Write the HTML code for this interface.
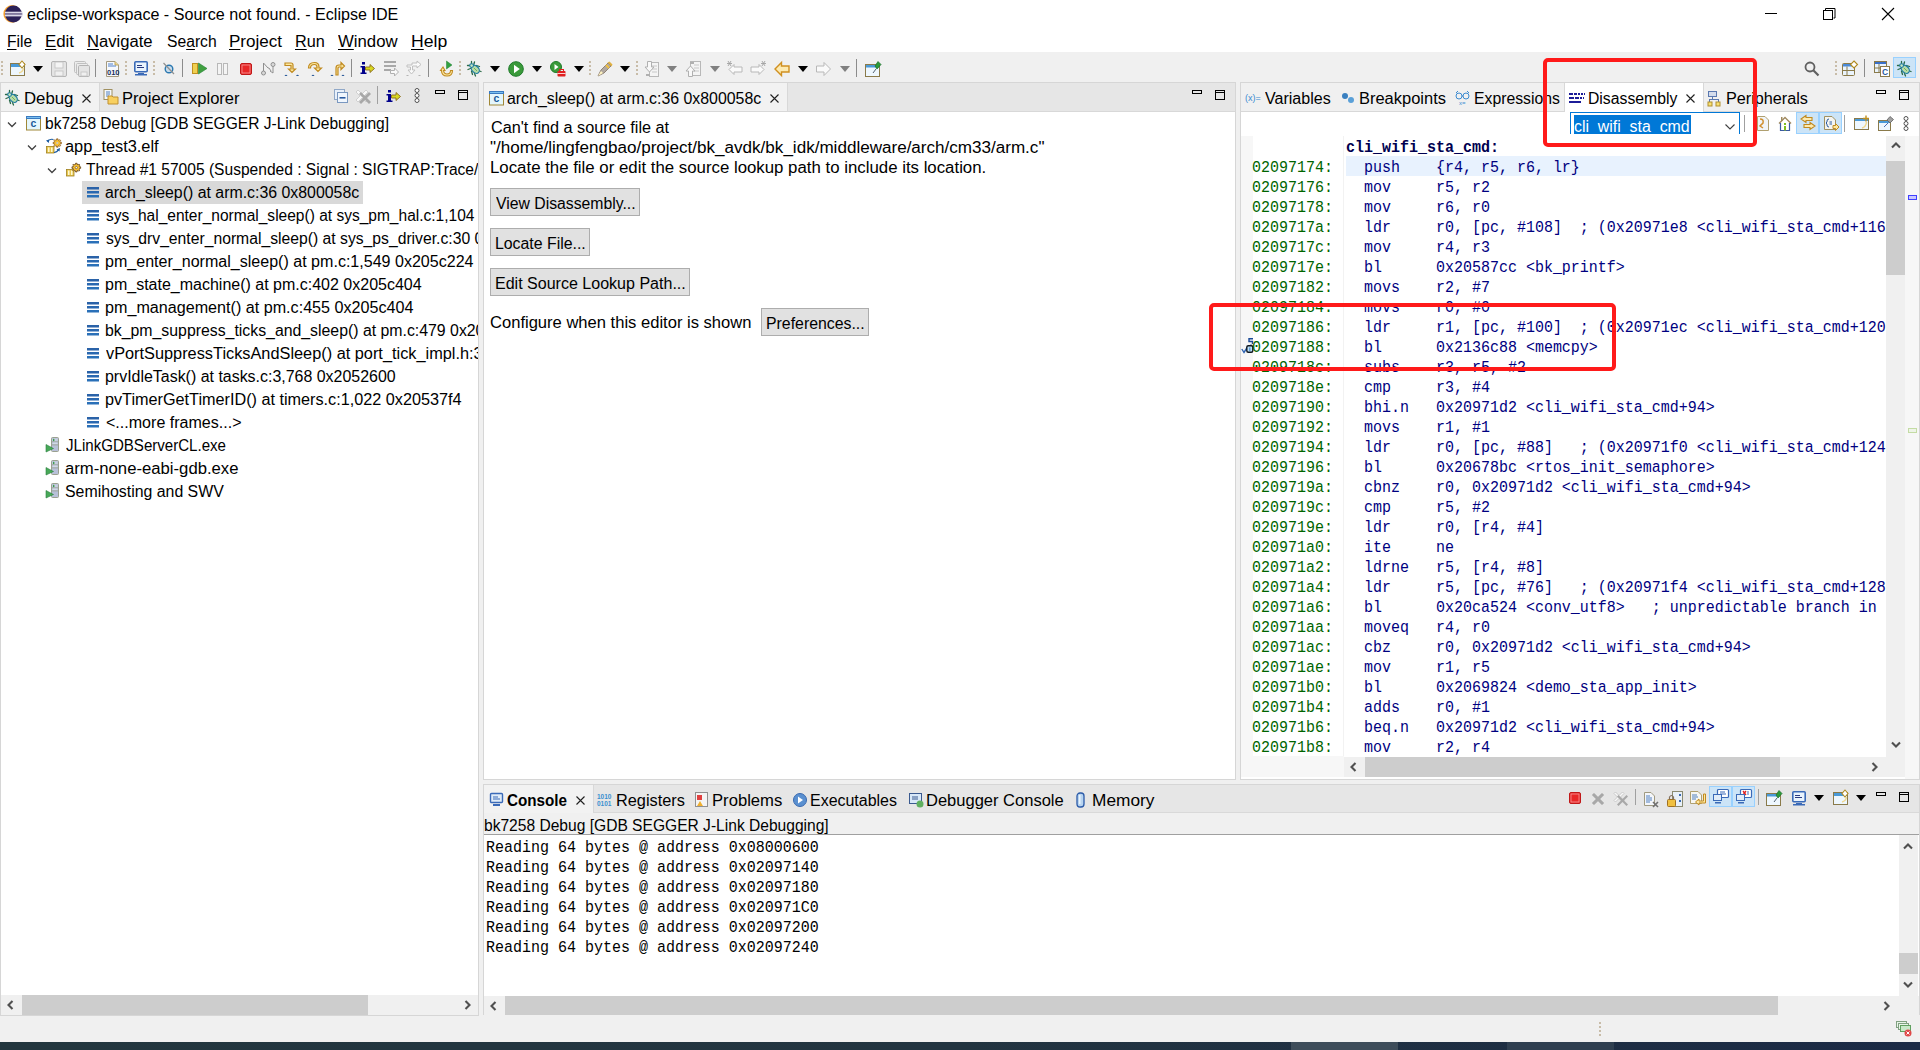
<!DOCTYPE html><html><head><meta charset="utf-8"><title>Eclipse IDE</title><style>
*{margin:0;padding:0}
html,body{width:1920px;height:1050px;overflow:hidden}
body{position:relative;background:#f0f0f0;font-family:"Liberation Sans",sans-serif;color:#000}
.a{position:absolute}
.t{position:absolute;white-space:pre;transform-origin:0 0;line-height:20px}
.m{font-family:"Liberation Mono",monospace}
u{text-decoration:underline;text-underline-offset:2px}
svg{overflow:visible}
</style></head><body><div class="a" style="left:0px;top:0px;width:1920px;height:52px;background:#ffffff;"></div>
<svg class="a" style="left:0;top:2px" width="26" height="24" viewBox="0 0 26 24"><circle cx="12.2" cy="11.9" r="8.8" fill="#f5a030"/><circle cx="13.4" cy="11.9" r="8.5" fill="#2c2158"/><rect x="5" y="9.7" width="17.5" height="1.6" fill="#dcd8e8"/><rect x="5" y="11.3" width="17.5" height="1.5" fill="#9088aa"/><rect x="5" y="12.8" width="17.5" height="1.6" fill="#dcd8e8"/></svg>
<div class="t" style="left:26.90px;top:5.30px;font-size:16px;color:#000;transform:scaleX(1.0060);">eclipse-workspace - Source not found. - Eclipse IDE</div>
<div class="a" style="left:1765px;top:13px;width:12px;height:1px;background:#000;"></div>
<div class="a" style="left:1823px;top:10px;width:10px;height:10px;background:transparent;border:1px solid #000;box-sizing:border-box"></div>
<svg class="a" style="left:1825px;top:8px" width="11" height="11" viewBox="0 0 11 11"><path d="M0.5 2V0.5H10V10H8.5" fill="none" stroke="#000"/></svg>
<svg class="a" style="left:1882px;top:8px" width="12" height="12" viewBox="0 0 12 12"><path d="M0 0L12 12M12 0L0 12" stroke="#000" stroke-width="1.1"/></svg>
<div class="t" style="left:6.53px;top:31.90px;font-size:16px;color:#000;transform:scaleX(0.9748);"><u>F</u>ile</div>
<div class="t" style="left:44.63px;top:31.90px;font-size:16px;color:#000;transform:scaleX(1.0536);"><u>E</u>dit</div>
<div class="t" style="left:87.15px;top:31.90px;font-size:16px;color:#000;transform:scaleX(1.0376);"><u>N</u>avigate</div>
<div class="t" style="left:166.81px;top:31.90px;font-size:16px;color:#000;transform:scaleX(0.9796);">Se<u>a</u>rch</div>
<div class="t" style="left:228.62px;top:31.90px;font-size:16px;color:#000;transform:scaleX(1.0640);"><u>P</u>roject</div>
<div class="t" style="left:294.68px;top:31.90px;font-size:16px;color:#000;transform:scaleX(1.0148);"><u>R</u>un</div>
<div class="t" style="left:337.90px;top:31.90px;font-size:16px;color:#000;transform:scaleX(1.0457);"><u>W</u>indow</div>
<div class="t" style="left:410.57px;top:31.90px;font-size:16px;color:#000;transform:scaleX(1.1003);"><u>H</u>elp</div>
<div class="a" style="left:0px;top:52px;width:1920px;height:31px;background:#f0f0f0;"></div>
<div class="a" style="left:1px;top:61px;width:2px;height:2px;background:#c8bca8;"></div>
<div class="a" style="left:1px;top:65px;width:2px;height:2px;background:#c8bca8;"></div>
<div class="a" style="left:1px;top:69px;width:2px;height:2px;background:#c8bca8;"></div>
<div class="a" style="left:1px;top:73px;width:2px;height:2px;background:#c8bca8;"></div>
<svg class="a" style="left:10px;top:61px" width="16" height="16" viewBox="0 0 16 16"><rect x="0.5" y="2.5" width="14" height="12" fill="#eef7fe" stroke="#8a7a4a"/><rect x="1" y="3" width="13" height="3" fill="#4a9ad8"/><path d="M9 12Q13 11 13.5 7" fill="none" stroke="#f0d890" stroke-width="1.5"/><path d="M12 0L15 3.5L12 7L9 3.5Z" fill="#fff" stroke="#b08a20" stroke-width="1.1"/></svg>
<svg class="a" style="left:33px;top:66px" width="10" height="6" viewBox="0 0 10 6"><path d="M0 0H10L5 6Z" fill="#000"/></svg>
<svg class="a" style="left:51px;top:61px" width="16" height="16" viewBox="0 0 16 16"><rect x="0.5" y="0.5" width="15" height="15" rx="1.5" fill="#e4e4e4" stroke="#b4b4b4"/><rect x="4" y="1" width="8" height="6" fill="#f4f4f4" stroke="#c0c0c0" stroke-width="0.8"/><rect x="4" y="10" width="8" height="5" fill="#f0f0f0" stroke="#c0c0c0" stroke-width="0.8"/></svg>
<svg class="a" style="left:74px;top:61px" width="16" height="16" viewBox="0 0 16 16"><rect x="0.5" y="0.5" width="11" height="11" rx="1" fill="#ececec" stroke="#c0c0c0"/><rect x="2.5" y="2.5" width="11" height="11" rx="1" fill="#ececec" stroke="#c0c0c0"/><rect x="4.5" y="4.5" width="11" height="11" rx="1.2" fill="#e4e4e4" stroke="#b4b4b4"/><rect x="7" y="11" width="6" height="4" fill="#f0f0f0" stroke="#c0c0c0" stroke-width="0.8"/></svg>
<div class="a" style="left:95px;top:59px;width:1px;height:18px;background:#8c8c8c;"></div>
<svg class="a" style="left:106px;top:61px" width="16" height="16" viewBox="0 0 16 16"><path d="M0.5 0.5H9L12.5 4V15.5H0.5Z" fill="#f6f9fd" stroke="#a49a80"/><path d="M9 0.5V4H12.5" fill="#f0d890" stroke="#c0a860"/><path d="M2 3H7M2 5H10" stroke="#5080c8" stroke-width="1"/><text x="1" y="14" font-family="Liberation Sans" font-weight="bold" font-size="7.5" fill="#1a3060">010</text></svg>
<div class="a" style="left:125px;top:61px;width:2px;height:2px;background:#c8bca8;"></div>
<div class="a" style="left:125px;top:65px;width:2px;height:2px;background:#c8bca8;"></div>
<div class="a" style="left:125px;top:69px;width:2px;height:2px;background:#c8bca8;"></div>
<div class="a" style="left:125px;top:73px;width:2px;height:2px;background:#c8bca8;"></div>
<svg class="a" style="left:134px;top:61px" width="16" height="16" viewBox="0 0 16 16"><rect x="0.8" y="0.8" width="12.4" height="10" rx="1" fill="#eaf4fd" stroke="#3a6ab8" stroke-width="1.6"/><path d="M3 4.5H8M3 6.5H10" stroke="#2a3a80" stroke-width="1"/><rect x="4" y="12" width="6" height="1" fill="#3a6ab8"/><rect x="1" y="13" width="12" height="1.5" fill="#3a6ab8"/></svg>
<div class="a" style="left:153px;top:61px;width:2px;height:2px;background:#c8bca8;"></div>
<div class="a" style="left:153px;top:65px;width:2px;height:2px;background:#c8bca8;"></div>
<div class="a" style="left:153px;top:69px;width:2px;height:2px;background:#c8bca8;"></div>
<div class="a" style="left:153px;top:73px;width:2px;height:2px;background:#c8bca8;"></div>
<svg class="a" style="left:163px;top:62px" width="16" height="16" viewBox="0 0 16 16"><circle cx="6" cy="7" r="3.8" fill="#c8dcec" stroke="#2a78b0" stroke-width="1.4"/><path d="M0.5 1L11 12" stroke="#909090" stroke-width="1.2"/></svg>
<div class="a" style="left:182px;top:59px;width:1px;height:18px;background:#8c8c8c;"></div>
<svg class="a" style="left:192px;top:62px" width="16" height="16" viewBox="0 0 16 16"><rect x="0.5" y="1.5" width="5" height="10" fill="#f0d050" stroke="#c09020"/><path d="M6.5 1L15 6.5L6.5 12Z" fill="#40a040" stroke="#208030" stroke-width="0.6"/></svg>
<svg class="a" style="left:217px;top:62px" width="16" height="16" viewBox="0 0 16 16"><rect x="0.5" y="1.5" width="4" height="11" fill="#f4f4f4" stroke="#b8b8b8"/><rect x="6.5" y="1.5" width="4" height="11" fill="#f4f4f4" stroke="#b8b8b8"/></svg>
<svg class="a" style="left:240px;top:63px" width="16" height="16" viewBox="0 0 16 16"><rect x="0.5" y="0.5" width="11" height="11" rx="1.5" fill="#e82828" stroke="#c01818"/><rect x="2" y="2" width="8" height="8" fill="none" stroke="#f49a9a" stroke-width="0.8"/></svg>
<svg class="a" style="left:261px;top:62px" width="16" height="16" viewBox="0 0 16 16"><circle cx="2.5" cy="11" r="2" fill="#d8d8d8" stroke="#909090"/><circle cx="12" cy="2.5" r="2" fill="#d8d8d8" stroke="#909090"/><path d="M2.5 9V1L7 6H8L10 9M12 4.5V11L9 9" fill="none" stroke="#909090"/></svg>
<svg class="a" style="left:284px;top:61px" width="16" height="16" viewBox="0 0 16 16"><path d="M1 2H7Q9 2 9 4V8H11.5L8 11.5L4.5 8H7V4.5H1Z" fill="#fce8a0" stroke="#c08a20" stroke-width="1.2"/><path d="M0.5 15Q2 12.5 3.5 15ZM12 15Q13.5 12.5 15 15Z" fill="#2a5a9a"/></svg>
<svg class="a" style="left:307px;top:61px" width="16" height="16" viewBox="0 0 16 16"><path d="M1.5 7Q1.5 1.5 7.5 1.5Q12 1.5 12 6V7H14.5L11 10.5L7.5 7H10V6Q10 3.5 7.5 3.5Q3.5 3.5 3.5 7Z" fill="#fce8a0" stroke="#c08a20" stroke-width="1.2"/><path d="M4.5 15Q6 12.5 7.5 15Z" fill="#2a5a9a"/></svg>
<svg class="a" style="left:330px;top:61px" width="16" height="16" viewBox="0 0 16 16"><path d="M6 14V7Q6 4 9 4H11V1.5L14.5 5L11 8.5V6H9Q8 6 8 7V14Z" fill="#fce8a0" stroke="#c08a20" stroke-width="1.2"/><path d="M0.5 15Q2 12.5 3.5 15ZM11.5 15Q13 12.5 14.5 15Z" fill="#2a5a9a"/></svg>
<div class="a" style="left:351px;top:59px;width:1px;height:18px;background:#8c8c8c;"></div>
<svg class="a" style="left:360px;top:61px" width="16" height="16" viewBox="0 0 16 16"><rect x="2" y="1" width="3" height="2.5" fill="#00008b"/><path d="M0.5 5H5V11.5H6.5V13H0.5V11.5H2V6.5H0.5Z" fill="#00008b"/><path d="M5.5 6H10V3.5L14.5 7.5L10 11.5V9H5.5Z" fill="#d8d820" stroke="#8a6a20" stroke-width="0.9"/></svg>
<svg class="a" style="left:384px;top:61px" width="16" height="16" viewBox="0 0 16 16"><rect x="0" y="0" width="12" height="2" fill="#a8a8a8"/><rect x="0" y="4" width="12" height="2" fill="#a8a8a8"/><rect x="0" y="8" width="7" height="2" fill="#a8a8a8"/><path d="M6.5 9.5H10.5V7L14.5 11L10.5 15V12.5H6.5Z" fill="#fafafa" stroke="#b0b0b0"/></svg>
<svg class="a" style="left:406px;top:61px" width="16" height="16" viewBox="0 0 16 16"><path d="M1 3H6V1H11V-1L15 2.5L11 6V4H6.5V8H9L5.5 12L2 8H4.5V5H1Z" fill="#fafafa" stroke="#c0c0c0" transform="translate(0,1)"/><path d="M0 15Q1.5 13 3 15ZM12 15Q13.5 13 15 15Z" fill="#b0b0b0"/></svg>
<div class="a" style="left:428px;top:59px;width:1px;height:18px;background:#8c8c8c;"></div>
<svg class="a" style="left:438px;top:61px" width="16" height="16" viewBox="0 0 16 16"><path d="M8.5 0L14 4L8.5 8Z" fill="#30a040" stroke="#208030" stroke-width="0.5"/><path d="M2.5 9.5L5 6L7 9.5H5.5Q6 13 9 13Q12.5 13 12.5 9.5H14.5Q14.5 15 9 15Q3.5 15 3.5 9.5Z" fill="#fce8a0" stroke="#c08a20" stroke-width="1.1"/></svg>
<div class="a" style="left:459px;top:61px;width:2px;height:2px;background:#c8bca8;"></div>
<div class="a" style="left:459px;top:65px;width:2px;height:2px;background:#c8bca8;"></div>
<div class="a" style="left:459px;top:69px;width:2px;height:2px;background:#c8bca8;"></div>
<div class="a" style="left:459px;top:73px;width:2px;height:2px;background:#c8bca8;"></div>
<svg class="a" style="left:467px;top:61px" width="16" height="16" viewBox="0 0 16 16"><g stroke="#2a6a48" stroke-width="1.3" stroke-linecap="round"><path d="M4.5 0.5V3M0.5 4.5H3M7.5 1L6.8 3.5M9.5 4.5L12.5 5.5M1 8.5L3.5 7.5M11 9.5L14 10.5M4.5 10L5.5 13.5M7.5 12.5L8.5 15"/></g><ellipse cx="8.3" cy="8.3" rx="3.3" ry="4.6" transform="rotate(-45 8.3 8.3)" fill="#b8dca8" stroke="#1e7aa0" stroke-width="1.2"/><circle cx="4.6" cy="4.6" r="1.9" fill="#c8e8c0" stroke="#1e7aa0" stroke-width="1.1"/><path d="M7 7L10 10" stroke="#70b060" stroke-width="1"/></svg>
<svg class="a" style="left:490px;top:66px" width="10" height="6" viewBox="0 0 10 6"><path d="M0 0H10L5 6Z" fill="#000"/></svg>
<svg class="a" style="left:508px;top:61px" width="16" height="16" viewBox="0 0 16 16"><circle cx="8" cy="8" r="7.3" fill="#3a9a3a" stroke="#1e7a2a" stroke-width="1"/><path d="M6 3.8L11.8 8L6 12.2Z" fill="#fff"/></svg>
<svg class="a" style="left:532px;top:66px" width="10" height="6" viewBox="0 0 10 6"><path d="M0 0H10L5 6Z" fill="#000"/></svg>
<svg class="a" style="left:550px;top:61px" width="16" height="16" viewBox="0 0 16 16"><circle cx="6" cy="6" r="5.5" fill="#3a9a3a" stroke="#1e7a2a"/><path d="M4.5 3L8.5 6L4.5 9Z" fill="#fff"/><rect x="7.5" y="10" width="8" height="5.5" rx="0.8" fill="#e02020"/><rect x="9.5" y="8.5" width="4" height="2" fill="none" stroke="#e02020"/><path d="M7.5 12.5H15.5" stroke="#fff" stroke-width="0.8"/></svg>
<svg class="a" style="left:574px;top:66px" width="10" height="6" viewBox="0 0 10 6"><path d="M0 0H10L5 6Z" fill="#000"/></svg>
<div class="a" style="left:589px;top:61px;width:2px;height:2px;background:#c8bca8;"></div>
<div class="a" style="left:589px;top:65px;width:2px;height:2px;background:#c8bca8;"></div>
<div class="a" style="left:589px;top:69px;width:2px;height:2px;background:#c8bca8;"></div>
<div class="a" style="left:589px;top:73px;width:2px;height:2px;background:#c8bca8;"></div>
<svg class="a" style="left:597px;top:61px" width="16" height="16" viewBox="0 0 16 16"><path d="M1 15L4 9L11 2L14 5L7 12Z" fill="#b0a8a0" stroke="#807060" stroke-width="0.8"/><path d="M10.5 1.5L14.5 5.5L15.5 3.5L12.5 0.5Z" fill="#e0b040"/><path d="M1 15L4 10L6 12Z" fill="#fff4c0"/><path d="M9 4L12 7" stroke="#f0c040" stroke-width="2"/></svg>
<svg class="a" style="left:620px;top:66px" width="10" height="6" viewBox="0 0 10 6"><path d="M0 0H10L5 6Z" fill="#000"/></svg>
<div class="a" style="left:636px;top:61px;width:2px;height:2px;background:#c8bca8;"></div>
<div class="a" style="left:636px;top:65px;width:2px;height:2px;background:#c8bca8;"></div>
<div class="a" style="left:636px;top:69px;width:2px;height:2px;background:#c8bca8;"></div>
<div class="a" style="left:636px;top:73px;width:2px;height:2px;background:#c8bca8;"></div>
<svg class="a" style="left:645px;top:61px" width="16" height="16" viewBox="0 0 16 16"><rect x="4.5" y="1.5" width="9" height="14" fill="#f4f4f4" stroke="#b8b8b8"/><path d="M7 5H12M7 8H12M7 11H12" stroke="#c8c8c8"/><path d="M2.5 0.5H6.5V6H9L4.5 11L0 6H2.5Z" fill="#f8f8f8" stroke="#b0b0b0"/><rect x="1" y="13" width="4" height="2" fill="#b0b0b0"/></svg>
<svg class="a" style="left:667px;top:66px" width="10" height="6" viewBox="0 0 10 6"><path d="M0 0H10L5 6Z" fill="#808080"/></svg>
<svg class="a" style="left:686px;top:61px" width="16" height="16" viewBox="0 0 16 16"><rect x="4.5" y="0.5" width="10" height="14" fill="#f4f4f4" stroke="#b8b8b8"/><path d="M8 4H13M8 7H13M8 10H13" stroke="#c8c8c8"/><rect x="4" y="1" width="4" height="2" fill="#b0b0b0"/><path d="M2.5 15.5H6.5V10H9L4.5 5L0 10H2.5Z" fill="#f8f8f8" stroke="#b0b0b0"/></svg>
<svg class="a" style="left:710px;top:66px" width="10" height="6" viewBox="0 0 10 6"><path d="M0 0H10L5 6Z" fill="#808080"/></svg>
<svg class="a" style="left:727px;top:61px" width="16" height="16" viewBox="0 0 16 16"><path d="M7 3.5V6H15V11H7V13.5L2 8.5Z" fill="#fafafa" stroke="#b8b8b8"/><path d="M1 0L4 5M4 0L1 5M0 2.5H5" stroke="#a0a0a0" stroke-width="0.9"/></svg>
<svg class="a" style="left:750px;top:61px" width="16" height="16" viewBox="0 0 16 16"><path d="M9 3.5V6H1V11H9V13.5L14 8.5Z" fill="#fafafa" stroke="#b8b8b8"/><path d="M12 0L15 5M15 0L12 5M11 2.5H16" stroke="#a0a0a0" stroke-width="0.9"/></svg>
<svg class="a" style="left:774px;top:61px" width="16" height="16" viewBox="0 0 16 16"><path d="M7.5 1.5V5H15V11H7.5V14.5L1 8Z" fill="#fdeab0" stroke="#d09020" stroke-width="1.4"/></svg>
<svg class="a" style="left:798px;top:66px" width="10" height="6" viewBox="0 0 10 6"><path d="M0 0H10L5 6Z" fill="#000"/></svg>
<svg class="a" style="left:816px;top:61px" width="16" height="16" viewBox="0 0 16 16"><path d="M8 1.5V5H0.5V11H8V14.5L14.5 8Z" fill="#fafafa" stroke="#b8b8b8" stroke-width="1"/></svg>
<svg class="a" style="left:840px;top:66px" width="10" height="6" viewBox="0 0 10 6"><path d="M0 0H10L5 6Z" fill="#808080"/></svg>
<div class="a" style="left:856px;top:59px;width:1px;height:18px;background:#8c8c8c;"></div>
<svg class="a" style="left:865px;top:61px" width="16" height="16" viewBox="0 0 16 16"><rect x="0.5" y="3.5" width="14" height="12" fill="#eef7fe" stroke="#8a7a4a"/><rect x="1" y="4" width="13" height="2.5" fill="#4a9ad8"/><path d="M8 12L11 8" stroke="#506070" stroke-width="1"/><path d="M10 5L13 0.5L16 3.5L12 8Z" fill="#2a9a3a" stroke="#1a6a2a" stroke-width="0.7"/></svg>
<svg class="a" style="left:1804px;top:61px" width="16" height="16" viewBox="0 0 16 16"><circle cx="6" cy="6" r="4.5" fill="none" stroke="#606060" stroke-width="1.8"/><path d="M9.3 9.3L14.5 14.5" stroke="#606060" stroke-width="2.2"/></svg>
<div class="a" style="left:1835px;top:61px;width:2px;height:2px;background:#c8bca8;"></div>
<div class="a" style="left:1835px;top:65px;width:2px;height:2px;background:#c8bca8;"></div>
<div class="a" style="left:1835px;top:69px;width:2px;height:2px;background:#c8bca8;"></div>
<div class="a" style="left:1835px;top:73px;width:2px;height:2px;background:#c8bca8;"></div>
<svg class="a" style="left:1842px;top:61px" width="16" height="16" viewBox="0 0 16 16"><rect x="0.5" y="2.5" width="12" height="12" rx="1" fill="#eaf4fd" stroke="#8a7a4a"/><rect x="1" y="3" width="11" height="2.5" fill="#4a8ad8"/><path d="M5 5.5V14.5M1 9.5H12" stroke="#8a7a4a"/><path d="M12 0L15.5 3.5L12 7L8.5 3.5Z" fill="#fff" stroke="#b08a20" stroke-width="1.1"/></svg>
<div class="a" style="left:1864px;top:59px;width:1px;height:18px;background:#8c8c8c;"></div>
<svg class="a" style="left:1874px;top:61px" width="16" height="16" viewBox="0 0 16 16"><rect x="0.5" y="0.5" width="12" height="11" fill="#eaf4fd" stroke="#8a7a4a"/><rect x="1" y="1" width="11" height="2" fill="#3a70c8"/><path d="M5 3V11.5M1 7H12" stroke="#8a7a4a"/><rect x="6.5" y="5.5" width="9" height="10" fill="#fff" stroke="#8a7a4a"/><text x="11" y="14" font-family="Liberation Sans" font-weight="bold" font-size="8.5" fill="#2a5aa0" text-anchor="middle">C</text></svg>
<div class="a" style="left:1893px;top:57px;width:23px;height:21px;background:#cce4f7;border:1px solid #99d1ff;box-sizing:border-box"></div>
<svg class="a" style="left:1897px;top:61px" width="16" height="16" viewBox="0 0 16 16"><g stroke="#2a6a48" stroke-width="1.3" stroke-linecap="round"><path d="M4.5 0.5V3M0.5 4.5H3M7.5 1L6.8 3.5M9.5 4.5L12.5 5.5M1 8.5L3.5 7.5M11 9.5L14 10.5M4.5 10L5.5 13.5M7.5 12.5L8.5 15"/></g><ellipse cx="8.3" cy="8.3" rx="3.3" ry="4.6" transform="rotate(-45 8.3 8.3)" fill="#b8dca8" stroke="#1e7aa0" stroke-width="1.2"/><circle cx="4.6" cy="4.6" r="1.9" fill="#c8e8c0" stroke="#1e7aa0" stroke-width="1.1"/><path d="M7 7L10 10" stroke="#70b060" stroke-width="1"/></svg>
<div class="a" style="left:0px;top:82px;width:479px;height:934px;background:#d6d6d6;"></div>
<div class="a" style="left:1px;top:83px;width:477px;height:28px;background:#e6e6e6;"></div>
<div class="a" style="left:1px;top:83px;width:98px;height:28px;background:#f2f2f2;"></div>
<div class="a" style="left:99px;top:83px;width:1px;height:28px;background:#d8d8d8;"></div>
<div class="a" style="left:1px;top:111px;width:477px;height:1px;background:#d8d8d8;"></div>
<div class="a" style="left:1px;top:112px;width:477px;height:883px;background:#ffffff;"></div>
<svg class="a" style="left:5px;top:90px" width="16" height="16" viewBox="0 0 16 16"><g stroke="#2a6a48" stroke-width="1.3" stroke-linecap="round"><path d="M4.5 0.5V3M0.5 4.5H3M7.5 1L6.8 3.5M9.5 4.5L12.5 5.5M1 8.5L3.5 7.5M11 9.5L14 10.5M4.5 10L5.5 13.5M7.5 12.5L8.5 15"/></g><ellipse cx="8.3" cy="8.3" rx="3.3" ry="4.6" transform="rotate(-45 8.3 8.3)" fill="#b8dca8" stroke="#1e7aa0" stroke-width="1.2"/><circle cx="4.6" cy="4.6" r="1.9" fill="#c8e8c0" stroke="#1e7aa0" stroke-width="1.1"/><path d="M7 7L10 10" stroke="#70b060" stroke-width="1"/></svg>
<div class="t" style="left:23.64px;top:89.30px;font-size:16px;color:#000;transform:scaleX(1.0468);">Debug</div>
<svg class="a" style="left:82px;top:94px" width="9" height="9" viewBox="0 0 9 9"><path d="M0.5 0.5L8.5 8.5M8.5 0.5L0.5 8.5" stroke="#202020" stroke-width="1.1"/></svg>
<svg class="a" style="left:103px;top:89px" width="16" height="16" viewBox="0 0 16 16"><rect x="1" y="0.5" width="8" height="10" fill="#f4f8fc" stroke="#a09060"/><path d="M3 3H7M3 5H7M3 7H6" stroke="#5080c0"/><path d="M5 7H9L10 8H15V15H5Z" fill="#f8d060" stroke="#c09030"/></svg>
<div class="t" style="left:121.66px;top:89.30px;font-size:16px;color:#000;transform:scaleX(1.0329);">Project Explorer</div>
<div class="a" style="left:435px;top:90px;width:10px;height:4px;background:transparent;border:1px solid #000;box-sizing:border-box"></div>
<div class="a" style="left:458px;top:90px;width:10px;height:10px;background:transparent;border:1px solid #000;box-sizing:border-box"></div>
<div class="a" style="left:458px;top:92px;width:10px;height:1px;background:#000;"></div>
<svg class="a" style="left:334px;top:89px" width="16" height="16" viewBox="0 0 16 16"><rect x="0.5" y="0.5" width="10" height="10" fill="#e8f0fa" stroke="#90a8c8"/><rect x="3.5" y="3.5" width="10" height="10" fill="#f0f6fd" stroke="#7a98c0"/><rect x="5.5" y="8" width="6" height="1.6" fill="#2a5aa0"/></svg>
<svg class="a" style="left:356px;top:89px" width="16" height="16" viewBox="0 0 16 16"><path d="M2 1L6 5L10 1L12 3L8 7L12 11L10 13L6 9L2 13L0 11L4 7L0 3Z" fill="#f8f8f8" stroke="#c8c8c8" stroke-width="0.8"/><path d="M5 5L9 9L13 5L15 7L11 11L15 15L13 17L9 13L5 17L3 15L7 11L3 7Z" fill="#a8a8a8" transform="translate(0,-2)"/></svg>
<div class="a" style="left:377px;top:86px;width:1px;height:18px;background:#a0a0a0;"></div>
<svg class="a" style="left:386px;top:89px" width="16" height="16" viewBox="0 0 16 16"><rect x="2" y="1" width="3" height="2.5" fill="#00008b"/><path d="M0.5 5H5V11.5H6.5V13H0.5V11.5H2V6.5H0.5Z" fill="#00008b"/><path d="M5.5 6H10V3.5L14.5 7.5L10 11.5V9H5.5Z" fill="#d8d820" stroke="#8a6a20" stroke-width="0.9"/></svg>
<svg class="a" style="left:414px;top:88px" width="16" height="16" viewBox="0 0 16 16"><circle cx="3" cy="2.5" r="2" fill="#fff" stroke="#505050"/><circle cx="3" cy="7.5" r="2" fill="#fff" stroke="#505050"/><circle cx="3" cy="12.5" r="2" fill="#fff" stroke="#505050"/></svg>
<div class="a" style="left:1px;top:112px;width:477px;height:883px;overflow:hidden">
<div class="a" style="left:81px;top:69px;width:281px;height:23px;background:#d9d9d9;"></div>
<svg class="a" style="left:24.5px;top:4px" width="16" height="16" viewBox="0 0 16 16"><rect x="0.5" y="0.5" width="14" height="13.5" fill="#e4f6fc" stroke="#a08838"/><rect x="0" y="0" width="15" height="3" fill="#3a7ac0"/><rect x="1" y="1" width="13" height="1" fill="#7ac0f0"/><text x="7.5" y="11" font-family="Liberation Sans" font-weight="bold" font-size="10.5" fill="#1a5a9a" text-anchor="middle">c</text></svg>
<svg class="a" style="left:6px;top:7.5px" width="10" height="10" viewBox="0 0 10 10"><path d="M1 2.5L5 6.5L9 2.5" fill="none" stroke="#404040" stroke-width="1.3"/></svg>
<div class="t" style="left:44.03px;top:1.50px;font-size:16px;color:#000;transform:scaleX(0.9721);">bk7258 Debug [GDB SEGGER J-Link Debugging]</div>
<svg class="a" style="left:45px;top:26px" width="16" height="16" viewBox="0 0 16 16"><path d="M1.5 3.5Q3.5 0.5 7.5 1.5" fill="none" stroke="#1a5aa0" stroke-width="1.2"/><path d="M0 2.5L2.8 5L3.2 1.5Z" fill="#1a5aa0"/><rect x="0.5" y="8.5" width="7.5" height="6.5" fill="#e8c850" stroke="#a08020" stroke-width="0.8"/><rect x="2" y="9.5" width="1.5" height="4.5" fill="#fff8d0"/><rect x="5" y="9.5" width="1.5" height="4.5" fill="#fff8d0"/><path d="M15.43 4.25L15.43 5.75L14.33 5.65L13.91 6.68L14.75 7.39L13.69 8.45L12.98 7.61L11.95 8.03L12.05 9.13L10.55 9.13L10.65 8.03L9.62 7.61L8.91 8.45L7.85 7.39L8.69 6.68L8.27 5.65L7.17 5.75L7.17 4.25L8.27 4.35L8.69 3.32L7.85 2.61L8.91 1.55L9.62 2.39L10.65 1.97L10.55 0.87L12.05 0.87L11.95 1.97L12.98 2.39L13.69 1.55L14.75 2.61L13.91 3.32L14.33 4.35Z" fill="#f8c030" stroke="#805020" stroke-width="0.7"/><circle cx="11.3" cy="5" r="1.1" fill="#c8c8c8"/><path d="M8 14.5Q11 14.5 12.5 11.5" fill="none" stroke="#1a5aa0" stroke-width="1.2"/><path d="M14 10L10.5 11.5L13.5 13.5Z" fill="#1a5aa0"/></svg>
<svg class="a" style="left:26px;top:30.5px" width="10" height="10" viewBox="0 0 10 10"><path d="M1 2.5L5 6.5L9 2.5" fill="none" stroke="#404040" stroke-width="1.3"/></svg>
<div class="t" style="left:64.28px;top:24.50px;font-size:16px;color:#000;transform:scaleX(1.0220);">app_test3.elf</div>
<svg class="a" style="left:65px;top:51px" width="16" height="16" viewBox="0 0 16 16"><rect x="0.5" y="6.5" width="7.5" height="6.5" fill="#e8c850" stroke="#a08020" stroke-width="0.8"/><rect x="2" y="7.5" width="1.5" height="4.5" fill="#fff8d0"/><rect x="5" y="7.5" width="1.5" height="4.5" fill="#fff8d0"/><path d="M14.63 3.81L14.63 5.39L13.53 5.30L13.07 6.39L13.92 7.10L12.80 8.22L12.09 7.37L11.00 7.83L11.09 8.93L9.51 8.93L9.60 7.83L8.51 7.37L7.80 8.22L6.68 7.10L7.53 6.39L7.07 5.30L5.97 5.39L5.97 3.81L7.07 3.90L7.53 2.81L6.68 2.10L7.80 0.98L8.51 1.83L9.60 1.37L9.51 0.27L11.09 0.27L11.00 1.37L12.09 1.83L12.80 0.98L13.92 2.10L13.07 2.81L13.53 3.90Z" fill="#f8c030" stroke="#604020" stroke-width="0.8"/><circle cx="10.3" cy="4.6" r="1.1" fill="#fff" stroke="#604020" stroke-width="0.6"/></svg>
<svg class="a" style="left:46px;top:53.5px" width="10" height="10" viewBox="0 0 10 10"><path d="M1 2.5L5 6.5L9 2.5" fill="none" stroke="#404040" stroke-width="1.3"/></svg>
<div class="t" style="left:84.71px;top:47.50px;font-size:16px;color:#000;transform:scaleX(0.9731);">Thread #1 57005 (Suspended : Signal : SIGTRAP:Trace/breakpoint trap)</div>
<svg class="a" style="left:86px;top:75px" width="16" height="16" viewBox="0 0 16 16"><rect x="0" y="0" width="12" height="2.5" fill="#2a62a8"/><rect x="0" y="4" width="12" height="2.5" fill="#2a68b0"/><rect x="0" y="8" width="12" height="2.5" fill="#2a70b8"/></svg>
<div class="t" style="left:104.31px;top:70.50px;font-size:16px;color:#000;transform:scaleX(0.9922);">arch_sleep() at arm.c:36 0x800058c</div>
<svg class="a" style="left:86px;top:98px" width="16" height="16" viewBox="0 0 16 16"><rect x="0" y="0" width="12" height="2.5" fill="#2a62a8"/><rect x="0" y="4" width="12" height="2.5" fill="#2a68b0"/><rect x="0" y="8" width="12" height="2.5" fill="#2a70b8"/></svg>
<div class="t" style="left:104.51px;top:93.50px;font-size:16px;color:#000;transform:scaleX(0.9702);">sys_hal_enter_normal_sleep() at sys_pm_hal.c:1,104 0x8000c2a</div>
<svg class="a" style="left:86px;top:121px" width="16" height="16" viewBox="0 0 16 16"><rect x="0" y="0" width="12" height="2.5" fill="#2a62a8"/><rect x="0" y="4" width="12" height="2.5" fill="#2a68b0"/><rect x="0" y="8" width="12" height="2.5" fill="#2a70b8"/></svg>
<div class="t" style="left:104.51px;top:116.50px;font-size:16px;color:#000;transform:scaleX(0.9819);">sys_drv_enter_normal_sleep() at sys_ps_driver.c:30 0x20c6b1e</div>
<svg class="a" style="left:86px;top:144px" width="16" height="16" viewBox="0 0 16 16"><rect x="0" y="0" width="12" height="2.5" fill="#2a62a8"/><rect x="0" y="4" width="12" height="2.5" fill="#2a68b0"/><rect x="0" y="8" width="12" height="2.5" fill="#2a70b8"/></svg>
<div class="t" style="left:104.00px;top:139.50px;font-size:16px;color:#000;transform:scaleX(1.0033);">pm_enter_normal_sleep() at pm.c:1,549 0x205c224</div>
<svg class="a" style="left:86px;top:167px" width="16" height="16" viewBox="0 0 16 16"><rect x="0" y="0" width="12" height="2.5" fill="#2a62a8"/><rect x="0" y="4" width="12" height="2.5" fill="#2a68b0"/><rect x="0" y="8" width="12" height="2.5" fill="#2a70b8"/></svg>
<div class="t" style="left:104.00px;top:162.50px;font-size:16px;color:#000;">pm_state_machine() at pm.c:402 0x205c404</div>
<svg class="a" style="left:86px;top:190px" width="16" height="16" viewBox="0 0 16 16"><rect x="0" y="0" width="12" height="2.5" fill="#2a62a8"/><rect x="0" y="4" width="12" height="2.5" fill="#2a68b0"/><rect x="0" y="8" width="12" height="2.5" fill="#2a70b8"/></svg>
<div class="t" style="left:103.99px;top:185.50px;font-size:16px;color:#000;transform:scaleX(1.0082);">pm_management() at pm.c:455 0x205c404</div>
<svg class="a" style="left:86px;top:213px" width="16" height="16" viewBox="0 0 16 16"><rect x="0" y="0" width="12" height="2.5" fill="#2a62a8"/><rect x="0" y="4" width="12" height="2.5" fill="#2a68b0"/><rect x="0" y="8" width="12" height="2.5" fill="#2a70b8"/></svg>
<div class="t" style="left:104.01px;top:208.50px;font-size:16px;color:#000;transform:scaleX(0.9898);">bk_pm_suppress_ticks_and_sleep() at pm.c:479 0x205c4c0</div>
<svg class="a" style="left:86px;top:236px" width="16" height="16" viewBox="0 0 16 16"><rect x="0" y="0" width="12" height="2.5" fill="#2a62a8"/><rect x="0" y="4" width="12" height="2.5" fill="#2a68b0"/><rect x="0" y="8" width="12" height="2.5" fill="#2a70b8"/></svg>
<div class="t" style="left:104.90px;top:231.50px;font-size:16px;color:#000;transform:scaleX(1.0198);">vPortSuppressTicksAndSleep() at port_tick_impl.h:35 0x2052c4a</div>
<svg class="a" style="left:86px;top:259px" width="16" height="16" viewBox="0 0 16 16"><rect x="0" y="0" width="12" height="2.5" fill="#2a62a8"/><rect x="0" y="4" width="12" height="2.5" fill="#2a68b0"/><rect x="0" y="8" width="12" height="2.5" fill="#2a70b8"/></svg>
<div class="t" style="left:104.00px;top:254.50px;font-size:16px;color:#000;transform:scaleX(0.9962);">prvIdleTask() at tasks.c:3,768 0x2052600</div>
<svg class="a" style="left:86px;top:282px" width="16" height="16" viewBox="0 0 16 16"><rect x="0" y="0" width="12" height="2.5" fill="#2a62a8"/><rect x="0" y="4" width="12" height="2.5" fill="#2a68b0"/><rect x="0" y="8" width="12" height="2.5" fill="#2a70b8"/></svg>
<div class="t" style="left:103.99px;top:277.50px;font-size:16px;color:#000;transform:scaleX(1.0134);">pvTimerGetTimerID() at timers.c:1,022 0x20537f4</div>
<svg class="a" style="left:86px;top:305px" width="16" height="16" viewBox="0 0 16 16"><rect x="0" y="0" width="12" height="2.5" fill="#2a62a8"/><rect x="0" y="4" width="12" height="2.5" fill="#2a68b0"/><rect x="0" y="8" width="12" height="2.5" fill="#2a70b8"/></svg>
<div class="t" style="left:105.20px;top:300.50px;font-size:16px;color:#000;transform:scaleX(1.0030);">&lt;...more frames...&gt;</div>
<svg class="a" style="left:45px;top:325px" width="16" height="16" viewBox="0 0 16 16"><rect x="5.5" y="0.5" width="7" height="14" rx="1" fill="#b8c0d8" stroke="#9aa090"/><rect x="6.5" y="1.5" width="5" height="2.5" fill="#c8d0e0"/><path d="M7 1.5L9 3L7 4.5Z" fill="#3a9a4a"/><rect x="5.5" y="4.5" width="7" height="0.8" fill="#9aa090"/><rect x="6.5" y="5.5" width="5" height="1.8" fill="#d0d8e8"/><rect x="5.5" y="7.5" width="7" height="0.8" fill="#9aa090"/><path d="M0 7.5L7.5 11.5L0 15Z" fill="#48a858" stroke="#2a8040" stroke-width="0.6"/></svg>
<div class="t" style="left:64.72px;top:323.50px;font-size:16px;color:#000;transform:scaleX(0.9419);">JLinkGDBServerCL.exe</div>
<svg class="a" style="left:45px;top:348px" width="16" height="16" viewBox="0 0 16 16"><rect x="5.5" y="0.5" width="7" height="14" rx="1" fill="#b8c0d8" stroke="#9aa090"/><rect x="6.5" y="1.5" width="5" height="2.5" fill="#c8d0e0"/><path d="M7 1.5L9 3L7 4.5Z" fill="#3a9a4a"/><rect x="5.5" y="4.5" width="7" height="0.8" fill="#9aa090"/><rect x="6.5" y="5.5" width="5" height="1.8" fill="#d0d8e8"/><rect x="5.5" y="7.5" width="7" height="0.8" fill="#9aa090"/><path d="M0 7.5L7.5 11.5L0 15Z" fill="#48a858" stroke="#2a8040" stroke-width="0.6"/></svg>
<div class="t" style="left:64.27px;top:346.50px;font-size:16px;color:#000;transform:scaleX(1.0431);">arm-none-eabi-gdb.exe</div>
<svg class="a" style="left:45px;top:371px" width="16" height="16" viewBox="0 0 16 16"><rect x="5.5" y="0.5" width="7" height="14" rx="1" fill="#b8c0d8" stroke="#9aa090"/><rect x="6.5" y="1.5" width="5" height="2.5" fill="#c8d0e0"/><path d="M7 1.5L9 3L7 4.5Z" fill="#3a9a4a"/><rect x="5.5" y="4.5" width="7" height="0.8" fill="#9aa090"/><rect x="6.5" y="5.5" width="5" height="1.8" fill="#d0d8e8"/><rect x="5.5" y="7.5" width="7" height="0.8" fill="#9aa090"/><path d="M0 7.5L7.5 11.5L0 15Z" fill="#48a858" stroke="#2a8040" stroke-width="0.6"/></svg>
<div class="t" style="left:64.31px;top:369.50px;font-size:16px;color:#000;transform:scaleX(0.9918);">Semihosting and SWV</div>
</div>
<div class="a" style="left:1px;top:995px;width:477px;height:20px;background:#f0f0f0;"></div>
<div class="a" style="left:22px;top:995px;width:346px;height:20px;background:#cdcdcd;"></div>
<svg class="a" style="left:6px;top:1000px" width="10" height="10" viewBox="0 0 10 10"><path d="M6.5 1L2.5 5L6.5 9" fill="none" stroke="#505050" stroke-width="2.1"/></svg>
<svg class="a" style="left:463px;top:1000px" width="10" height="10" viewBox="0 0 10 10"><path d="M2.5 1L6.5 5L2.5 9" fill="none" stroke="#505050" stroke-width="2.1"/></svg>
<div class="a" style="left:483px;top:82px;width:753px;height:698px;background:#d6d6d6;"></div>
<div class="a" style="left:484px;top:83px;width:751px;height:28px;background:#e6e6e6;"></div>
<div class="a" style="left:484px;top:83px;width:303px;height:28px;background:#f2f2f2;"></div>
<div class="a" style="left:787px;top:83px;width:1px;height:28px;background:#d8d8d8;"></div>
<div class="a" style="left:484px;top:111px;width:751px;height:1px;background:#d8d8d8;"></div>
<div class="a" style="left:484px;top:112px;width:751px;height:667px;background:#ffffff;"></div>
<svg class="a" style="left:489px;top:91px" width="16" height="16" viewBox="0 0 16 16"><rect x="0.5" y="0.5" width="14" height="13.5" fill="#e4f6fc" stroke="#a08838"/><rect x="0" y="0" width="15" height="3" fill="#3a7ac0"/><rect x="1" y="1" width="13" height="1" fill="#7ac0f0"/><text x="7.5" y="11" font-family="Liberation Sans" font-weight="bold" font-size="10.5" fill="#1a5a9a" text-anchor="middle">c</text></svg>
<div class="t" style="left:507.31px;top:89.30px;font-size:16px;color:#000;transform:scaleX(0.9922);">arch_sleep() at arm.c:36 0x800058c</div>
<svg class="a" style="left:770px;top:94px" width="9" height="9" viewBox="0 0 9 9"><path d="M0.5 0.5L8.5 8.5M8.5 0.5L0.5 8.5" stroke="#202020" stroke-width="1.1"/></svg>
<div class="a" style="left:1192px;top:90px;width:10px;height:4px;background:transparent;border:1px solid #000;box-sizing:border-box"></div>
<div class="a" style="left:1215px;top:90px;width:10px;height:10px;background:transparent;border:1px solid #000;box-sizing:border-box"></div>
<div class="a" style="left:1215px;top:92px;width:10px;height:1px;background:#000;"></div>
<div class="t" style="left:490.59px;top:118.40px;font-size:16px;color:#000;transform:scaleX(1.0143);">Can't find a source file at</div>
<div class="t" style="left:490.25px;top:138.20px;font-size:16px;color:#000;transform:scaleX(1.0661);">"/home/lingfengbao/project/bk_avdk/bk_idk/middleware/arch/cm33/arm.c"</div>
<div class="t" style="left:489.63px;top:158.10px;font-size:16px;color:#000;transform:scaleX(1.0507);">Locate the file or edit the source lookup path to include its location.</div>
<div class="a" style="left:490px;top:188px;width:150px;height:28px;background:#e1e1e1;border:1px solid #adadad;box-sizing:border-box"></div>
<div class="t" style="left:495.90px;top:193.50px;font-size:16px;color:#000;transform:scaleX(0.9850);">View Disassembly...</div>
<div class="a" style="left:490px;top:228px;width:100px;height:28px;background:#e1e1e1;border:1px solid #adadad;box-sizing:border-box"></div>
<div class="t" style="left:494.71px;top:233.50px;font-size:16px;color:#000;transform:scaleX(0.9899);">Locate File...</div>
<div class="a" style="left:490px;top:268px;width:200px;height:28px;background:#e1e1e1;border:1px solid #adadad;box-sizing:border-box"></div>
<div class="t" style="left:494.70px;top:273.50px;font-size:16px;color:#000;transform:scaleX(1.0021);">Edit Source Lookup Path...</div>
<div class="a" style="left:761px;top:308px;width:108px;height:28px;background:#e1e1e1;border:1px solid #adadad;box-sizing:border-box"></div>
<div class="t" style="left:765.71px;top:313.50px;font-size:16px;color:#000;transform:scaleX(0.9907);">Preferences...</div>
<div class="t" style="left:490.17px;top:313.00px;font-size:16px;color:#000;transform:scaleX(1.0351);">Configure when this editor is shown</div>
<div class="a" style="left:1240px;top:82px;width:680px;height:698px;background:#d6d6d6;"></div>
<div class="a" style="left:1241px;top:83px;width:678px;height:28px;background:#f0f0f0;"></div>
<div class="a" style="left:1241px;top:111px;width:678px;height:1px;background:#d8d8d8;"></div>
<div class="a" style="left:1565px;top:83px;width:138px;height:29px;background:#ffffff;"></div>
<div class="a" style="left:1564px;top:83px;width:1px;height:28px;background:#d8d8d8;"></div>
<div class="a" style="left:1703px;top:83px;width:1px;height:28px;background:#d8d8d8;"></div>
<div class="a" style="left:1241px;top:112px;width:678px;height:667px;background:#ffffff;"></div>
<svg class="a" style="left:1245px;top:90px" width="16" height="16" viewBox="0 0 16 16"><text x="0" y="11" font-family="Liberation Sans" font-size="9" fill="#3a8ad0">(x)=</text></svg>
<div class="t" style="left:1264.90px;top:89.30px;font-size:16px;color:#000;transform:scaleX(1.0031);">Variables</div>
<svg class="a" style="left:1340px;top:90px" width="16" height="16" viewBox="0 0 16 16"><circle cx="5" cy="6" r="3" fill="#3a80c0"/><circle cx="11" cy="10" r="3" fill="#5aa0d8"/></svg>
<div class="t" style="left:1358.66px;top:89.30px;font-size:16px;color:#000;transform:scaleX(1.0291);">Breakpoints</div>
<svg class="a" style="left:1455px;top:89px" width="16" height="16" viewBox="0 0 16 16"><circle cx="4" cy="7" r="3" fill="none" stroke="#3a8ad0"/><circle cx="11" cy="7" r="3" fill="none" stroke="#3a8ad0"/><path d="M7 7H8M1 4L3 2M14 4L12 2" stroke="#3a8ad0"/><text x="4" y="16" font-family="Liberation Sans" font-size="6" fill="#3a8ad0">x=</text></svg>
<div class="t" style="left:1473.72px;top:89.30px;font-size:16px;color:#000;transform:scaleX(0.9859);">Expressions</div>
<svg class="a" style="left:1569px;top:89px" width="16" height="16" viewBox="0 0 16 16"><g fill="#1c1c98"><rect x="0" y="4" width="4" height="2"/><rect x="5" y="4" width="3" height="2"/><rect x="9" y="4" width="2" height="2"/><rect x="12" y="4" width="2" height="2"/><rect x="15" y="4" width="1" height="2"/><rect x="0" y="8" width="5" height="2"/><rect x="6" y="8" width="4" height="2"/><rect x="11" y="8" width="2" height="2"/><rect x="14" y="8" width="1" height="2"/><rect x="0" y="12" width="12" height="2"/></g></svg>
<div class="t" style="left:1587.72px;top:89.30px;font-size:16px;color:#000;transform:scaleX(0.9843);">Disassembly</div>
<svg class="a" style="left:1686px;top:94px" width="9" height="9" viewBox="0 0 9 9"><path d="M0.5 0.5L8.5 8.5M8.5 0.5L0.5 8.5" stroke="#202020" stroke-width="1.1"/></svg>
<svg class="a" style="left:1708px;top:91px" width="16" height="16" viewBox="0 0 16 16"><rect x="0.5" y="0.5" width="8" height="5" fill="#d4dcec" stroke="#5a78b0"/><path d="M4.5 5.5V8.5M1.5 8.5H10.5M1.5 8V11M10.5 8V11" stroke="#5a78b0" stroke-width="1"/><rect x="0" y="11" width="4" height="4" fill="#f8e070" stroke="#b09030" stroke-width="1"/><rect x="8" y="11" width="4" height="4" fill="#f8e070" stroke="#b09030" stroke-width="1"/></svg>
<div class="t" style="left:1725.68px;top:89.30px;font-size:16px;color:#000;transform:scaleX(1.0127);">Peripherals</div>
<div class="a" style="left:1876px;top:90px;width:10px;height:4px;background:transparent;border:1px solid #000;box-sizing:border-box"></div>
<div class="a" style="left:1899px;top:90px;width:10px;height:10px;background:transparent;border:1px solid #000;box-sizing:border-box"></div>
<div class="a" style="left:1899px;top:92px;width:10px;height:1px;background:#000;"></div>
<div class="a" style="left:1570px;top:112px;width:170px;height:22px;background:#ffffff;border:1px solid #0078d7;border-bottom:none;box-sizing:border-box"></div>
<div class="a" style="left:1574px;top:115px;width:117px;height:19px;background:#0078d7;"></div>
<div class="t" style="left:1574.30px;top:116.50px;font-size:16px;color:#ffffff;transform:scaleX(0.9930);">cli_wifi_sta_cmd</div>
<svg class="a" style="left:1725px;top:124px" width="10" height="6" viewBox="0 0 10 6"><path d="M0.5 0.5L5 5L9.5 0.5" fill="none" stroke="#404040" stroke-width="1.1"/></svg>
<div class="a" style="left:1744px;top:115px;width:1px;height:17px;background:#a0a0a0;"></div>
<svg class="a" style="left:1757px;top:116px" width="16" height="16" viewBox="0 0 16 16"><path d="M0.5 0.5H8L11.5 4V14.5H0.5Z" fill="#f0f4f8" stroke="#b0a070"/><path d="M3 3Q7 3 6 7L3 10L6 12" fill="none" stroke="#d09030" stroke-width="1.5"/></svg>
<svg class="a" style="left:1778px;top:116px" width="16" height="16" viewBox="0 0 16 16"><path d="M1 7.5L7 1.5L13 7.5" fill="none" stroke="#a08a60" stroke-width="1.4"/><path d="M2.5 7V14.5H11.5V7" fill="#fff" stroke="#3a5aa0" stroke-width="1.2"/><rect x="6" y="7" width="2" height="2" fill="#80c020"/><rect x="6" y="10" width="2" height="4.5" fill="#80c020"/><rect x="3" y="1" width="1.5" height="4" fill="#a08a60"/></svg>
<div class="a" style="left:1796px;top:112px;width:23px;height:22px;background:#cce4f7;border:1px solid #99d1ff;box-sizing:border-box"></div>
<div class="a" style="left:1819px;top:112px;width:23px;height:22px;background:#cce4f7;border:1px solid #99d1ff;box-sizing:border-box"></div>
<svg class="a" style="left:1800px;top:115px" width="16" height="16" viewBox="0 0 16 16"><path d="M6 0.5L1 4L6 7.5V5.5H12V2.5H6Z" fill="#fdeab0" stroke="#c08a20" stroke-width="1.1"/><path d="M10 7.5L15 11L10 14.5V12.5H4V9.5H10Z" fill="#fdeab0" stroke="#c08a20" stroke-width="1.1"/></svg>
<svg class="a" style="left:1824px;top:116px" width="16" height="16" viewBox="0 0 16 16"><path d="M0.5 0.5H8L11.5 4V13.5H0.5Z" fill="#f4f4f0" stroke="#a09060"/><path d="M5 3Q3 3 3 5V6L2 7L3 8V9Q3 11 5 11M5.5 6H8M5.5 8H8" fill="none" stroke="#2a5aa0" stroke-width="1"/><path d="M9 9.5H11.5V7.5L15 11L11.5 14.5V12.5H9Z" fill="#fde8a0" stroke="#c08a20" stroke-width="1"/></svg>
<div class="a" style="left:1844px;top:115px;width:1px;height:17px;background:#a0a0a0;"></div>
<svg class="a" style="left:1854px;top:115px" width="16" height="16" viewBox="0 0 16 16"><rect x="0.5" y="3.5" width="14" height="11" fill="#eef7fe" stroke="#8a7a4a"/><rect x="1" y="4" width="13" height="2" fill="#4a9ad8"/><path d="M8 13Q12 12 12.5 7" fill="none" stroke="#f0d890" stroke-width="1.5"/><path d="M12 0.5V6.5M9 3.5H15" stroke="#c09020" stroke-width="1.4"/></svg>
<svg class="a" style="left:1878px;top:116px" width="16" height="16" viewBox="0 0 16 16"><rect x="0.5" y="4.5" width="12" height="10" fill="#eef7fe" stroke="#8a7a4a"/><rect x="1" y="5" width="11" height="2" fill="#4a9ad8"/><path d="M6 11L10 7" stroke="#4a6ab0" stroke-width="1"/><path d="M9 4L12 0.5L15.5 3.5L12 7Z" fill="#a0a0a0" stroke="#606060" stroke-width="0.8"/></svg>
<svg class="a" style="left:1903px;top:116px" width="16" height="16" viewBox="0 0 16 16"><circle cx="3" cy="2.5" r="2" fill="#fff" stroke="#505050"/><circle cx="3" cy="7.5" r="2" fill="#fff" stroke="#505050"/><circle cx="3" cy="12.5" r="2" fill="#fff" stroke="#505050"/></svg>
<div class="a" style="left:1241px;top:136px;width:12px;height:620px;background:#f7f7f7;"></div>
<div class="a" style="left:1343px;top:136px;width:1px;height:620px;background:#f2f2f2;"></div>
<div class="a" style="left:1346px;top:156px;width:540px;height:20px;background:#e8f2fe;"></div>
<div class="a" style="left:1886px;top:136px;width:19px;height:641px;background:#f0f0f0;"></div>
<div class="a" style="left:1886px;top:161px;width:19px;height:114px;background:#cdcdcd;"></div>
<svg class="a" style="left:1891px;top:141px" width="10" height="10" viewBox="0 0 10 10"><path d="M1 6.5L5 2.5L9 6.5" fill="none" stroke="#505050" stroke-width="2.1"/></svg>
<svg class="a" style="left:1891px;top:740px" width="10" height="10" viewBox="0 0 10 10"><path d="M1 2.5L5 6.5L9 2.5" fill="none" stroke="#505050" stroke-width="2.1"/></svg>
<div class="a" style="left:1905px;top:136px;width:14px;height:643px;background:#f7f7f7;"></div>
<div class="a" style="left:1908px;top:195px;width:9px;height:5px;background:#c8c8ff;border:1px solid #4040ff;box-sizing:border-box"></div>
<div class="a" style="left:1908px;top:428px;width:9px;height:5px;background:#eef4e8;border:1px solid #c4dca4;box-sizing:border-box"></div>
<div class="a" style="left:1241px;top:756px;width:103px;height:21px;background:#f7f7f7;"></div>
<div class="a" style="left:1344px;top:757px;width:542px;height:20px;background:#f0f0f0;"></div>
<div class="a" style="left:1365px;top:757px;width:415px;height:20px;background:#cdcdcd;"></div>
<svg class="a" style="left:1349px;top:762px" width="10" height="10" viewBox="0 0 10 10"><path d="M6.5 1L2.5 5L6.5 9" fill="none" stroke="#505050" stroke-width="2.1"/></svg>
<svg class="a" style="left:1870px;top:762px" width="10" height="10" viewBox="0 0 10 10"><path d="M2.5 1L6.5 5L2.5 9" fill="none" stroke="#505050" stroke-width="2.1"/></svg>
<svg class="a" style="left:1241px;top:337px" width="16" height="16" viewBox="0 0 16 16"><path d="M0.8 12L3 15.5L6.5 10" fill="none" stroke="#2a60b0" stroke-width="1.4"/><path d="M12 1.8H8V4.5H11.5V7M10 7.5V8.5" fill="none" stroke="#1a4a98" stroke-width="1.4"/><rect x="5.8" y="8.8" width="6" height="6.5" rx="1.5" fill="#bde0f8" stroke="#101820" stroke-width="1.4"/><rect x="8.2" y="10.5" width="1.2" height="3.5" fill="#4a90d0"/></svg>
<div class="a" style="left:1241px;top:136px;width:645px;height:620px;overflow:hidden">
<div class="t m" style="left:105.00px;top:1.50px;font-size:16.7px;color:#000050;font-weight:bold;transform:scaleX(0.8982);">cli_wifi_sta_cmd:</div>
<div class="t m" style="left:11.00px;top:21.50px;font-size:16.7px;color:#006400;transform:scaleX(0.8982);">02097174:</div>
<div class="t m" style="left:105.00px;top:21.50px;font-size:16.7px;color:#000080;transform:scaleX(0.8982);">  push    {r4, r5, r6, lr}</div>
<div class="t m" style="left:11.00px;top:41.50px;font-size:16.7px;color:#006400;transform:scaleX(0.8982);">02097176:</div>
<div class="t m" style="left:105.00px;top:41.50px;font-size:16.7px;color:#000080;transform:scaleX(0.8982);">  mov     r5, r2</div>
<div class="t m" style="left:11.00px;top:61.50px;font-size:16.7px;color:#006400;transform:scaleX(0.8982);">02097178:</div>
<div class="t m" style="left:105.00px;top:61.50px;font-size:16.7px;color:#000080;transform:scaleX(0.8982);">  mov     r6, r0</div>
<div class="t m" style="left:11.00px;top:81.50px;font-size:16.7px;color:#006400;transform:scaleX(0.8982);">0209717a:</div>
<div class="t m" style="left:105.00px;top:81.50px;font-size:16.7px;color:#000080;transform:scaleX(0.8982);">  ldr     r0, [pc, #108]  ; (0x20971e8 &lt;cli_wifi_sta_cmd+116&gt;)</div>
<div class="t m" style="left:11.00px;top:101.50px;font-size:16.7px;color:#006400;transform:scaleX(0.8982);">0209717c:</div>
<div class="t m" style="left:105.00px;top:101.50px;font-size:16.7px;color:#000080;transform:scaleX(0.8982);">  mov     r4, r3</div>
<div class="t m" style="left:11.00px;top:121.50px;font-size:16.7px;color:#006400;transform:scaleX(0.8982);">0209717e:</div>
<div class="t m" style="left:105.00px;top:121.50px;font-size:16.7px;color:#000080;transform:scaleX(0.8982);">  bl      0x20587cc &lt;bk_printf&gt;</div>
<div class="t m" style="left:11.00px;top:141.50px;font-size:16.7px;color:#006400;transform:scaleX(0.8982);">02097182:</div>
<div class="t m" style="left:105.00px;top:141.50px;font-size:16.7px;color:#000080;transform:scaleX(0.8982);">  movs    r2, #7</div>
<div class="t m" style="left:11.00px;top:161.50px;font-size:16.7px;color:#006400;transform:scaleX(0.8982);">02097184:</div>
<div class="t m" style="left:105.00px;top:161.50px;font-size:16.7px;color:#000080;transform:scaleX(0.8982);">  movs    r0, #0</div>
<div class="t m" style="left:11.00px;top:181.50px;font-size:16.7px;color:#006400;transform:scaleX(0.8982);">02097186:</div>
<div class="t m" style="left:105.00px;top:181.50px;font-size:16.7px;color:#000080;transform:scaleX(0.8982);">  ldr     r1, [pc, #100]  ; (0x20971ec &lt;cli_wifi_sta_cmd+120&gt;)</div>
<div class="t m" style="left:11.00px;top:201.50px;font-size:16.7px;color:#006400;transform:scaleX(0.8982);">02097188:</div>
<div class="t m" style="left:105.00px;top:201.50px;font-size:16.7px;color:#000080;transform:scaleX(0.8982);">  bl      0x2136c88 &lt;memcpy&gt;</div>
<div class="t m" style="left:11.00px;top:221.50px;font-size:16.7px;color:#006400;transform:scaleX(0.8982);">0209718c:</div>
<div class="t m" style="left:105.00px;top:221.50px;font-size:16.7px;color:#000080;transform:scaleX(0.8982);">  subs    r3, r5, #2</div>
<div class="t m" style="left:11.00px;top:241.50px;font-size:16.7px;color:#006400;transform:scaleX(0.8982);">0209718e:</div>
<div class="t m" style="left:105.00px;top:241.50px;font-size:16.7px;color:#000080;transform:scaleX(0.8982);">  cmp     r3, #4</div>
<div class="t m" style="left:11.00px;top:261.50px;font-size:16.7px;color:#006400;transform:scaleX(0.8982);">02097190:</div>
<div class="t m" style="left:105.00px;top:261.50px;font-size:16.7px;color:#000080;transform:scaleX(0.8982);">  bhi.n   0x20971d2 &lt;cli_wifi_sta_cmd+94&gt;</div>
<div class="t m" style="left:11.00px;top:281.50px;font-size:16.7px;color:#006400;transform:scaleX(0.8982);">02097192:</div>
<div class="t m" style="left:105.00px;top:281.50px;font-size:16.7px;color:#000080;transform:scaleX(0.8982);">  movs    r1, #1</div>
<div class="t m" style="left:11.00px;top:301.50px;font-size:16.7px;color:#006400;transform:scaleX(0.8982);">02097194:</div>
<div class="t m" style="left:105.00px;top:301.50px;font-size:16.7px;color:#000080;transform:scaleX(0.8982);">  ldr     r0, [pc, #88]   ; (0x20971f0 &lt;cli_wifi_sta_cmd+124&gt;)</div>
<div class="t m" style="left:11.00px;top:321.50px;font-size:16.7px;color:#006400;transform:scaleX(0.8982);">02097196:</div>
<div class="t m" style="left:105.00px;top:321.50px;font-size:16.7px;color:#000080;transform:scaleX(0.8982);">  bl      0x20678bc &lt;rtos_init_semaphore&gt;</div>
<div class="t m" style="left:11.00px;top:341.50px;font-size:16.7px;color:#006400;transform:scaleX(0.8982);">0209719a:</div>
<div class="t m" style="left:105.00px;top:341.50px;font-size:16.7px;color:#000080;transform:scaleX(0.8982);">  cbnz    r0, 0x20971d2 &lt;cli_wifi_sta_cmd+94&gt;</div>
<div class="t m" style="left:11.00px;top:361.50px;font-size:16.7px;color:#006400;transform:scaleX(0.8982);">0209719c:</div>
<div class="t m" style="left:105.00px;top:361.50px;font-size:16.7px;color:#000080;transform:scaleX(0.8982);">  cmp     r5, #2</div>
<div class="t m" style="left:11.00px;top:381.50px;font-size:16.7px;color:#006400;transform:scaleX(0.8982);">0209719e:</div>
<div class="t m" style="left:105.00px;top:381.50px;font-size:16.7px;color:#000080;transform:scaleX(0.8982);">  ldr     r0, [r4, #4]</div>
<div class="t m" style="left:11.00px;top:401.50px;font-size:16.7px;color:#006400;transform:scaleX(0.8982);">020971a0:</div>
<div class="t m" style="left:105.00px;top:401.50px;font-size:16.7px;color:#000080;transform:scaleX(0.8982);">  ite     ne</div>
<div class="t m" style="left:11.00px;top:421.50px;font-size:16.7px;color:#006400;transform:scaleX(0.8982);">020971a2:</div>
<div class="t m" style="left:105.00px;top:421.50px;font-size:16.7px;color:#000080;transform:scaleX(0.8982);">  ldrne   r5, [r4, #8]</div>
<div class="t m" style="left:11.00px;top:441.50px;font-size:16.7px;color:#006400;transform:scaleX(0.8982);">020971a4:</div>
<div class="t m" style="left:105.00px;top:441.50px;font-size:16.7px;color:#000080;transform:scaleX(0.8982);">  ldr     r5, [pc, #76]   ; (0x20971f4 &lt;cli_wifi_sta_cmd+128&gt;)</div>
<div class="t m" style="left:11.00px;top:461.50px;font-size:16.7px;color:#006400;transform:scaleX(0.8982);">020971a6:</div>
<div class="t m" style="left:105.00px;top:461.50px;font-size:16.7px;color:#000080;transform:scaleX(0.8982);">  bl      0x20ca524 &lt;conv_utf8&gt;   ; unpredictable branch in IT block</div>
<div class="t m" style="left:11.00px;top:481.50px;font-size:16.7px;color:#006400;transform:scaleX(0.8982);">020971aa:</div>
<div class="t m" style="left:105.00px;top:481.50px;font-size:16.7px;color:#000080;transform:scaleX(0.8982);">  moveq   r4, r0</div>
<div class="t m" style="left:11.00px;top:501.50px;font-size:16.7px;color:#006400;transform:scaleX(0.8982);">020971ac:</div>
<div class="t m" style="left:105.00px;top:501.50px;font-size:16.7px;color:#000080;transform:scaleX(0.8982);">  cbz     r0, 0x20971d2 &lt;cli_wifi_sta_cmd+94&gt;</div>
<div class="t m" style="left:11.00px;top:521.50px;font-size:16.7px;color:#006400;transform:scaleX(0.8982);">020971ae:</div>
<div class="t m" style="left:105.00px;top:521.50px;font-size:16.7px;color:#000080;transform:scaleX(0.8982);">  mov     r1, r5</div>
<div class="t m" style="left:11.00px;top:541.50px;font-size:16.7px;color:#006400;transform:scaleX(0.8982);">020971b0:</div>
<div class="t m" style="left:105.00px;top:541.50px;font-size:16.7px;color:#000080;transform:scaleX(0.8982);">  bl      0x2069824 &lt;demo_sta_app_init&gt;</div>
<div class="t m" style="left:11.00px;top:561.50px;font-size:16.7px;color:#006400;transform:scaleX(0.8982);">020971b4:</div>
<div class="t m" style="left:105.00px;top:561.50px;font-size:16.7px;color:#000080;transform:scaleX(0.8982);">  adds    r0, #1</div>
<div class="t m" style="left:11.00px;top:581.50px;font-size:16.7px;color:#006400;transform:scaleX(0.8982);">020971b6:</div>
<div class="t m" style="left:105.00px;top:581.50px;font-size:16.7px;color:#000080;transform:scaleX(0.8982);">  beq.n   0x20971d2 &lt;cli_wifi_sta_cmd+94&gt;</div>
<div class="t m" style="left:11.00px;top:601.50px;font-size:16.7px;color:#006400;transform:scaleX(0.8982);">020971b8:</div>
<div class="t m" style="left:105.00px;top:601.50px;font-size:16.7px;color:#000080;transform:scaleX(0.8982);">  mov     r2, r4</div>
</div>
<div class="a" style="left:483px;top:784px;width:1437px;height:231px;background:#d6d6d6;"></div>
<div class="a" style="left:484px;top:785px;width:1435px;height:28px;background:#e6e6e6;"></div>
<div class="a" style="left:484px;top:785px;width:109px;height:28px;background:#f2f2f2;"></div>
<div class="a" style="left:593px;top:785px;width:1px;height:28px;background:#d8d8d8;"></div>
<div class="a" style="left:484px;top:813px;width:1435px;height:21px;background:#f0f0f0;"></div>
<div class="a" style="left:484px;top:812px;width:1435px;height:1px;background:#d9d9d9;"></div>
<div class="a" style="left:484px;top:812px;width:109px;height:1px;background:#f2f2f2;"></div>
<div class="a" style="left:484px;top:834px;width:1435px;height:1px;background:#a0a0a0;"></div>
<div class="a" style="left:484px;top:835px;width:1435px;height:180px;background:#ffffff;"></div>
<svg class="a" style="left:489px;top:792px" width="16" height="16" viewBox="0 0 16 16"><rect x="1.5" y="1.5" width="12" height="9" rx="1" fill="#e0ecf8" stroke="#3a6ab8" stroke-width="1.4"/><path d="M4 5H9M4 7H11" stroke="#3a6ab8"/><rect x="4" y="12" width="7" height="2" fill="#3a6ab8"/></svg>
<div class="t" style="left:507.43px;top:790.50px;font-size:16px;color:#000;font-weight:bold;transform:scaleX(0.9516);">Console</div>
<svg class="a" style="left:576px;top:796px" width="9" height="9" viewBox="0 0 9 9"><path d="M0.5 0.5L8.5 8.5M8.5 0.5L0.5 8.5" stroke="#202020" stroke-width="1.1"/></svg>
<svg class="a" style="left:597px;top:792px" width="16" height="16" viewBox="0 0 16 16"><text x="0" y="7" font-family="Liberation Sans" font-weight="bold" font-size="6.5" fill="#3a90d0">1010</text><text x="0" y="14" font-family="Liberation Sans" font-weight="bold" font-size="6.5" fill="#3a90d0">0101</text></svg>
<div class="t" style="left:615.67px;top:790.50px;font-size:16px;color:#000;transform:scaleX(1.0198);">Registers</div>
<svg class="a" style="left:694px;top:792px" width="16" height="16" viewBox="0 0 16 16"><rect x="1.5" y="0.5" width="12" height="14" fill="#f4f4f4" stroke="#909090"/><rect x="3" y="3" width="5" height="5" fill="#e04040"/><path d="M3 14L6 9L9 14Z" fill="#f0b030"/></svg>
<div class="t" style="left:712.35px;top:790.50px;font-size:16px;color:#000;transform:scaleX(1.0396);">Problems</div>
<svg class="a" style="left:792px;top:792px" width="16" height="16" viewBox="0 0 16 16"><circle cx="8" cy="8" r="6.5" fill="#5a90d0" stroke="#3a6ab0"/><path d="M6 4.5L11 8L6 11.5Z" fill="#fff"/></svg>
<div class="t" style="left:810.40px;top:790.50px;font-size:16px;color:#000;transform:scaleX(0.9977);">Executables</div>
<svg class="a" style="left:909px;top:792px" width="16" height="16" viewBox="0 0 16 16"><rect x="0.5" y="1.5" width="12" height="10" fill="#d8e8f8" stroke="#3a5a90"/><path d="M3 5H9M3 7H9" stroke="#3a5a90"/><circle cx="11" cy="12" r="3.5" fill="#60b060"/></svg>
<div class="t" style="left:925.66px;top:790.50px;font-size:16px;color:#000;transform:scaleX(1.0320);">Debugger Console</div>
<svg class="a" style="left:1074px;top:792px" width="16" height="16" viewBox="0 0 16 16"><rect x="3" y="1" width="7" height="14" rx="3" fill="#b8d4f0" stroke="#2a5aa8" stroke-width="1.3"/><rect x="5" y="3" width="1.5" height="9" fill="#e8f4fc"/></svg>
<div class="t" style="left:1091.60px;top:790.50px;font-size:16px;color:#000;transform:scaleX(1.0796);">Memory</div>
<div class="a" style="left:1876px;top:792px;width:10px;height:4px;background:transparent;border:1px solid #000;box-sizing:border-box"></div>
<div class="a" style="left:1899px;top:792px;width:10px;height:10px;background:transparent;border:1px solid #000;box-sizing:border-box"></div>
<div class="a" style="left:1899px;top:794px;width:10px;height:1px;background:#000;"></div>
<svg class="a" style="left:1569px;top:792px" width="16" height="16" viewBox="0 0 16 16"><rect x="0.5" y="0.5" width="11" height="11" rx="1.5" fill="#e82828" stroke="#c01818"/><rect x="2" y="2" width="8" height="8" fill="none" stroke="#f49a9a" stroke-width="0.8"/></svg>
<svg class="a" style="left:1591px;top:792px" width="16" height="16" viewBox="0 0 16 16"><path d="M1.5 3L3 1.5L7 5.5L11 1.5L12.5 3L8.5 7L12.5 11L11 12.5L7 8.5L3 12.5L1.5 11L5.5 7Z" fill="#a8a8a8" stroke="#a0a0a0" stroke-width="1"/></svg>
<svg class="a" style="left:1613px;top:791px" width="16" height="16" viewBox="0 0 16 16"><path d="M1 2.5L2.5 1L6 4.5L9.5 1L11 2.5L7.5 6L11 9.5L9.5 11L6 7.5L2.5 11L1 9.5L4.5 6Z" fill="#f8f8f8" stroke="#c0c0c0" stroke-width="0.8"/><path d="M4 5.5L5.5 4L9.5 8L13.5 4L15 5.5L11 9.5L15 13.5L13.5 15L9.5 11L5.5 15L4 13.5L8 9.5Z" fill="#a8a8a8"/></svg>
<div class="a" style="left:1635px;top:789px;width:1px;height:16px;background:#a0a0a0;"></div>
<svg class="a" style="left:1644px;top:792px" width="16" height="16" viewBox="0 0 16 16"><path d="M0.5 0.5H7L10.5 4V13.5H0.5Z" fill="#f4f6fa" stroke="#a09a80"/><path d="M2 4H6M2 6H8M2 8H8M2 10H6" stroke="#5080c0"/><path d="M9 10L14 15M14 10L9 15" stroke="#707070" stroke-width="1.6"/></svg>
<svg class="a" style="left:1667px;top:791px" width="16" height="16" viewBox="0 0 16 16"><rect x="5.5" y="0.5" width="10" height="15" fill="#e8f0f8" stroke="#8a8a70"/><rect x="12" y="3" width="2" height="2" fill="#3a6ab0"/><rect x="12" y="9" width="2" height="2" fill="#3a6ab0"/><rect x="0.5" y="8.5" width="8" height="7" rx="1" fill="#f0c040" stroke="#a07020"/><path d="M2.5 8.5V6Q4.5 3 6.5 6V8.5" fill="none" stroke="#807060" stroke-width="1.2"/></svg>
<svg class="a" style="left:1690px;top:791px" width="16" height="16" viewBox="0 0 16 16"><path d="M0.5 0.5H8L11.5 4V12.5H0.5Z" fill="#f6f6f2" stroke="#b0a070"/><path d="M2 4H7M2 6H8M2 8H6" stroke="#5080c0"/><path d="M13.5 3V10H9V8L5.5 11L9 14V12H15.5V3Z" fill="#fde8a0" stroke="#c08a20" stroke-width="1"/></svg>
<div class="a" style="left:1709px;top:786px;width:23px;height:21px;background:#cce4f7;border:1px solid #99d1ff;box-sizing:border-box"></div>
<div class="a" style="left:1732px;top:786px;width:23px;height:21px;background:#cce4f7;border:1px solid #99d1ff;box-sizing:border-box"></div>
<svg class="a" style="left:1713px;top:789px" width="16" height="16" viewBox="0 0 16 16"><rect x="4.5" y="0.5" width="11" height="8" rx="1" fill="#fff" stroke="#3a6ab8" stroke-width="1.2"/><path d="M7 3H12M7 5H13" stroke="#3a6ab8"/><rect x="0.5" y="5.5" width="8" height="6" fill="#e0ecf8" stroke="#3a6ab8"/><rect x="2" y="13" width="6" height="1.5" fill="#3a6ab8"/></svg>
<svg class="a" style="left:1736px;top:789px" width="16" height="16" viewBox="0 0 16 16"><rect x="4.5" y="0.5" width="11" height="8" rx="1" fill="#fff" stroke="#3a6ab8" stroke-width="1.2"/><path d="M7 2L10 6M10 2L7 6" stroke="#e02020" stroke-width="1.3"/><path d="M11 3H13M11 5H13" stroke="#3a6ab8"/><rect x="0.5" y="5.5" width="8" height="6" fill="#e0ecf8" stroke="#3a6ab8"/><rect x="2" y="13" width="6" height="1.5" fill="#3a6ab8"/></svg>
<div class="a" style="left:1758px;top:789px;width:1px;height:16px;background:#a0a0a0;"></div>
<svg class="a" style="left:1766px;top:790px" width="16" height="16" viewBox="0 0 16 16"><rect x="0.5" y="3.5" width="14" height="12" fill="#eef7fe" stroke="#8a7a4a"/><rect x="1" y="4" width="13" height="2.5" fill="#4a9ad8"/><path d="M8 12L11 8" stroke="#506070" stroke-width="1"/><path d="M10 5L13 0.5L16 3.5L12 8Z" fill="#2a9a3a" stroke="#1a6a2a" stroke-width="0.7"/></svg>
<svg class="a" style="left:1792px;top:791px" width="16" height="16" viewBox="0 0 16 16"><rect x="0.8" y="0.8" width="12.4" height="10" rx="1" fill="#eaf4fd" stroke="#3a6ab8" stroke-width="1.6"/><path d="M3 4.5H8M3 6.5H10" stroke="#2a3a80" stroke-width="1"/><rect x="4" y="12" width="6" height="1" fill="#3a6ab8"/><rect x="1" y="13" width="12" height="1.5" fill="#3a6ab8"/></svg>
<svg class="a" style="left:1814px;top:795px" width="10" height="6" viewBox="0 0 10 6"><path d="M0 0H10L5 6Z" fill="#000"/></svg>
<svg class="a" style="left:1833px;top:790px" width="16" height="16" viewBox="0 0 16 16"><rect x="0.5" y="2.5" width="14" height="12" fill="#eef7fe" stroke="#8a7a4a"/><rect x="1" y="3" width="13" height="3" fill="#4a9ad8"/><path d="M9 12Q13 11 13.5 7" fill="none" stroke="#f0d890" stroke-width="1.5"/><path d="M12 0L15 3.5L12 7L9 3.5Z" fill="#fff" stroke="#b08a20" stroke-width="1.1"/></svg>
<svg class="a" style="left:1856px;top:795px" width="10" height="6" viewBox="0 0 10 6"><path d="M0 0H10L5 6Z" fill="#000"/></svg>
<div class="t" style="left:484.03px;top:816.00px;font-size:16px;color:#000;transform:scaleX(0.9738);">bk7258 Debug [GDB SEGGER J-Link Debugging]</div>
<div class="t m" style="left:485.50px;top:837.80px;font-size:16.7px;color:#000000;transform:scaleX(0.8982);">Reading 64 bytes @ address 0x08000600</div>
<div class="t m" style="left:485.50px;top:857.80px;font-size:16.7px;color:#000000;transform:scaleX(0.8982);">Reading 64 bytes @ address 0x02097140</div>
<div class="t m" style="left:485.50px;top:877.80px;font-size:16.7px;color:#000000;transform:scaleX(0.8982);">Reading 64 bytes @ address 0x02097180</div>
<div class="t m" style="left:485.50px;top:897.80px;font-size:16.7px;color:#000000;transform:scaleX(0.8982);">Reading 64 bytes @ address 0x020971C0</div>
<div class="t m" style="left:485.50px;top:917.80px;font-size:16.7px;color:#000000;transform:scaleX(0.8982);">Reading 64 bytes @ address 0x02097200</div>
<div class="t m" style="left:485.50px;top:937.80px;font-size:16.7px;color:#000000;transform:scaleX(0.8982);">Reading 64 bytes @ address 0x02097240</div>
<div class="a" style="left:1899px;top:835px;width:19px;height:161px;background:#f0f0f0;"></div>
<div class="a" style="left:1899px;top:953px;width:19px;height:21px;background:#cdcdcd;"></div>
<svg class="a" style="left:1903px;top:842px" width="10" height="10" viewBox="0 0 10 10"><path d="M1 6.5L5 2.5L9 6.5" fill="none" stroke="#505050" stroke-width="2.1"/></svg>
<svg class="a" style="left:1903px;top:980px" width="10" height="10" viewBox="0 0 10 10"><path d="M1 2.5L5 6.5L9 2.5" fill="none" stroke="#505050" stroke-width="2.1"/></svg>
<div class="a" style="left:484px;top:996px;width:1435px;height:19px;background:#f0f0f0;"></div>
<div class="a" style="left:505px;top:996px;width:1273px;height:19px;background:#cdcdcd;"></div>
<svg class="a" style="left:489px;top:1001px" width="10" height="10" viewBox="0 0 10 10"><path d="M6.5 1L2.5 5L6.5 9" fill="none" stroke="#505050" stroke-width="2.1"/></svg>
<svg class="a" style="left:1882px;top:1001px" width="10" height="10" viewBox="0 0 10 10"><path d="M2.5 1L6.5 5L2.5 9" fill="none" stroke="#505050" stroke-width="2.1"/></svg>
<div class="a" style="left:1599px;top:1022px;width:2px;height:2px;background:#c8bca8;"></div>
<div class="a" style="left:1599px;top:1026px;width:2px;height:2px;background:#c8bca8;"></div>
<div class="a" style="left:1599px;top:1030px;width:2px;height:2px;background:#c8bca8;"></div>
<div class="a" style="left:1599px;top:1034px;width:2px;height:2px;background:#c8bca8;"></div>
<svg class="a" style="left:1896px;top:1021px" width="16" height="16" viewBox="0 0 16 16"><rect x="0.5" y="0.5" width="10" height="6" fill="#e8f4e8" stroke="#80a080"/><rect x="2.5" y="2.5" width="10" height="6" fill="#e8f4e8" stroke="#80a080"/><rect x="4.5" y="4.5" width="10" height="6" fill="#c8e8c8" stroke="#60a060"/><circle cx="12" cy="12" r="3.5" fill="#e04848"/><path d="M10.5 10.5L13.5 13.5M13.5 10.5L10.5 13.5" stroke="#fff" stroke-width="1"/></svg>
<div class="a" style="left:0;top:1042px;width:1920px;height:8px;background:linear-gradient(90deg,#22363e 0%,#223440 50%,#1b2a45 100%)"></div>
<div class="a" style="left:1291px;top:1042px;width:107px;height:8px;background:#3e4d5a;"></div>
<div class="a" style="left:1507px;top:1042px;width:107px;height:8px;background:#2f3f50;"></div>
<div class="a" style="left:1543px;top:58px;width:214px;height:88.5px;background:transparent;border:4px solid #ff1a1a;border-radius:5px;box-sizing:border-box"></div>
<div class="a" style="left:1209px;top:303px;width:407px;height:68px;background:transparent;border:4px solid #ff1a1a;border-radius:5px;box-sizing:border-box"></div></body></html>
